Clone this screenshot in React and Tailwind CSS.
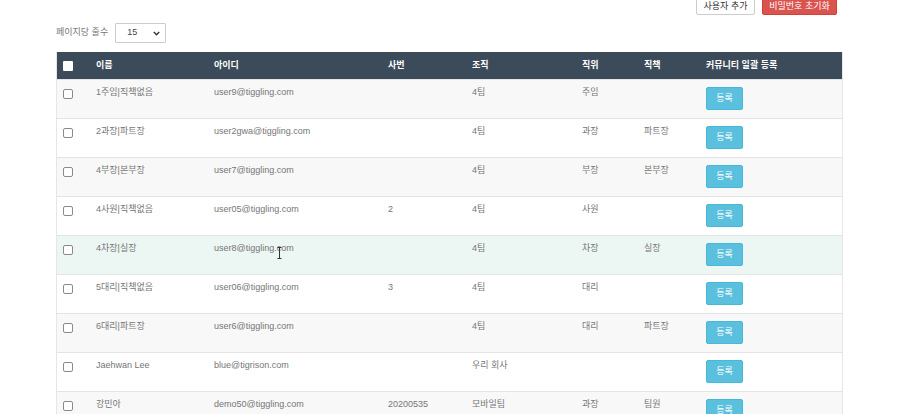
import React from "react";

const rows = [
  { name: "1주임|직책없음", id: "user9@tiggling.com", no: "", org: "4팀", pos: "주임", role: "" },
  { name: "2과장|파트장", id: "user2gwa@tiggling.com", no: "", org: "4팀", pos: "과장", role: "파트장" },
  { name: "4부장|본부장", id: "user7@tiggling.com", no: "", org: "4팀", pos: "부장", role: "본부장" },
  { name: "4사원|직책없음", id: "user05@tiggling.com", no: "2", org: "4팀", pos: "사원", role: "" },
  { name: "4차장|실장", id: "user8@tiggling.com", no: "", org: "4팀", pos: "차장", role: "실장", hover: true },
  { name: "5대리|직책없음", id: "user06@tiggling.com", no: "3", org: "4팀", pos: "대리", role: "" },
  { name: "6대리|파트장", id: "user6@tiggling.com", no: "", org: "4팀", pos: "대리", role: "파트장" },
  { name: "Jaehwan Lee", id: "blue@tigrison.com", no: "", org: "우리 회사", pos: "", role: "" },
  { name: "강민아", id: "demo50@tiggling.com", no: "20200535", org: "모바일팀", pos: "과장", role: "팀원" },
];

const cols = "grid grid-cols-[39px_118px_174px_84px_110px_62px_62px_1fr]";

export default function App() {
  return (
    <div
      className="relative w-[900px] h-[414px] overflow-hidden bg-white"
      style={{ fontFamily: '"Liberation Sans", "Noto Sans CJK KR", sans-serif' }}
    >
      <div className="flex justify-end gap-[7px] pr-[63px] mt-[-7px]">
        <div className="h-[22px] w-[59px] flex items-center justify-center border border-[#cccccc] rounded-[2px] bg-white text-[#333333] text-[9px] pt-[5px]">
          사용자 추가
        </div>
        <div className="h-[22px] w-[75px] flex items-center justify-center border border-[#d43f3a] rounded-[2px] bg-[#d9534f] text-white text-[9px] pt-[5px]">
          비밀번호 초기화
        </div>
      </div>

      <div className="flex items-center ml-[56px] mt-[8px] gap-[7px]">
        <span className="text-[9px] text-[#777777]">페이지당 줄수</span>
        <div className="relative h-[20px] w-[51px] border border-[#cccccc] rounded-[1px] bg-white flex items-center pl-[11px] text-[9px] text-[#444444]">
          15
          <svg className="absolute right-[5px] top-[7px]" width="7" height="5" viewBox="0 0 7 5">
            <path d="M0.8 1 L3.5 3.8 L6.2 1" fill="none" stroke="#333" strokeWidth="1.4" />
          </svg>
        </div>
      </div>

      <div className="ml-[56px] mt-[9px] w-[787px] border-l border-r border-[#e6e6e6]">
        <div className={`${cols} h-[27px] bg-[#3c4b5a] items-center text-white text-[9px] font-bold`}>
          <div className="pl-[6px]">
            <div className="w-[10px] h-[10px] bg-white rounded-[1px]" />
          </div>
          <div>이름</div>
          <div>아이디</div>
          <div>사번</div>
          <div>조직</div>
          <div>직위</div>
          <div>직책</div>
          <div>커뮤니티 일괄 등록</div>
        </div>
        {rows.map((r, i) => (
          <div
            key={i}
            className={`${cols} h-[39px] border-t border-[#e4e4e4] text-[9px] text-[#767676] ${
              r.hover ? "bg-[#ecf6f2]" : i % 2 === 0 ? "bg-[#f8f8f8]" : "bg-white"
            }`}
          >
            <div className="pl-[6px] pt-[9px]">
              <div className="w-[10px] h-[10px] border border-[#8a8a8a] rounded-[2px] bg-white" />
            </div>
            <div className="pt-[7px] leading-[11px]">{r.name}</div>
            <div className="pt-[7px] leading-[11px] relative">
              {r.id}
              {r.hover && (
                <svg className="absolute left-[63px] top-[11px]" width="5" height="12" viewBox="0 0 5 12">
                  <path d="M0.5 0.5 H4.5 M2.5 0.5 V11.5 M0.5 11.5 H4.5" stroke="#333" strokeWidth="1" fill="none" />
                </svg>
              )}
            </div>
            <div className="pt-[7px] leading-[11px]">{r.no}</div>
            <div className="pt-[7px] leading-[11px]">{r.org}</div>
            <div className="pt-[7px] leading-[11px]">{r.pos}</div>
            <div className="pt-[7px] leading-[11px]">{r.role}</div>
            <div className="pt-[7px]">
              <div className="w-[37px] h-[23px] flex items-center justify-center bg-[#5bc0de] border border-[#46b8da] rounded-[2px] text-white text-[9px]">
                등록
              </div>
            </div>
          </div>
        ))}
      </div>
    </div>
  );
}
